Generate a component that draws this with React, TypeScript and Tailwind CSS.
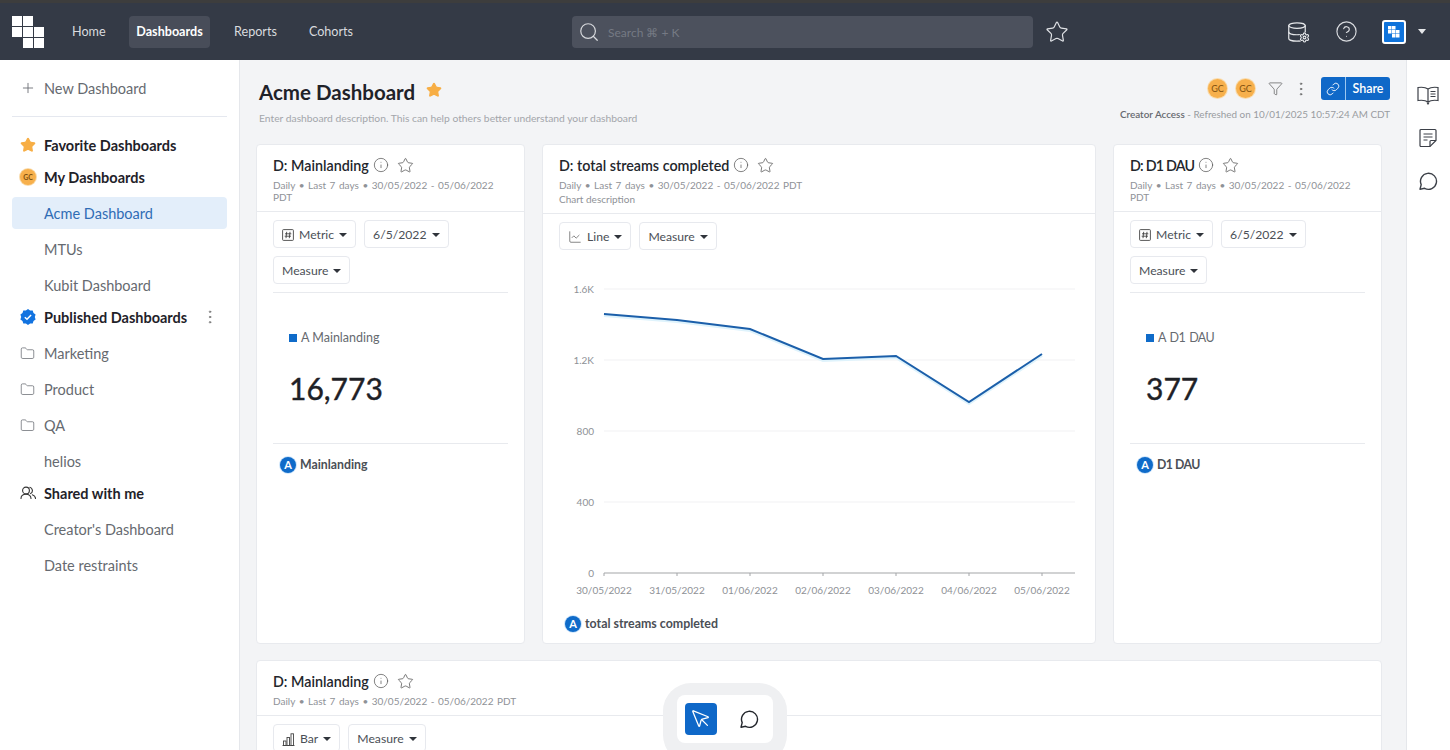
import React from "react";
import { Star, Info, Funnel, EllipsisVertical, Link, Plus, Folder, Search, CircleHelp, Database, Settings, MousePointer, ChartLine } from "lucide-react";

const Caret = ({ className = "border-t-[#333]" }: { className?: string }) => (
  <span className={`inline-block w-0 h-0 border-x-[4px] border-x-transparent border-t-[4px] ${className}`} />
);

const Logo = () => (
  <svg width="32" height="32" viewBox="0 0 32 32" className="shrink-0" fill="#fff">
    <rect x="0" y="0" width="10" height="10" />
    <rect x="11" y="0" width="10" height="10" />
    <rect x="0" y="11" width="10" height="10" />
    <rect x="11" y="11" width="10" height="10" />
    <rect x="22" y="11" width="10" height="10" />
    <rect x="11" y="22" width="10" height="10" />
    <rect x="22" y="22" width="10" height="10" />
  </svg>
);

const Bubble = ({ size = 20, color = "#3c4048" }: { size?: number; color?: string }) => (
  <svg width={size} height={size} viewBox="0 0 20 20" fill="none" stroke={color} strokeWidth="1.4" strokeLinejoin="round">
    <path d="M2 18.2 L3.2 13.6 A8 8 0 1 1 6.6 17.3 Z" />
  </svg>
);

const Avatar = ({ size = 19, text = "text-[9px]" }: { size?: number; text?: string }) => (
  <span
    className={`inline-flex items-center justify-center rounded-full bg-[#f7b04c] text-[#80500f] ring-1 ring-[#f9dcae] ${text}`}
    style={{ width: size, height: size }}
  >
    GC
  </span>
);

const Heading = ({ icon, children, extra }: { icon: React.ReactNode; children: React.ReactNode; extra?: React.ReactNode }) => (
  <div className="h-8 flex items-center pl-5 pr-6 text-[14.5px] font-bold text-[#1f2229]">
    <span className="w-[24px] flex items-center shrink-0">{icon}</span>
    <span className="flex-1 pt-[2px]">{children}</span>
    {extra}
  </div>
);

const Item = ({ children, active, icon }: { children: React.ReactNode; active?: boolean; icon?: React.ReactNode }) => (
  <div className={`h-8 mt-1 mx-3 rounded flex items-center pl-2 text-[14.5px] ${active ? "bg-[#e3eefa] text-[#2f6cb5]" : "text-[#666a70]"}`}>
    <span className="w-[24px] flex items-center shrink-0">{icon}</span>
    <span className="pt-[2px]">{children}</span>
  </div>
);

const Sidebar = () => (
  <aside className="w-[240px] shrink-0 bg-white border-r border-[#e5e7eb] pt-3">
    <div className="h-8 flex items-center pl-5 text-[14.5px] text-[#666a70]">
      <span className="w-[24px] flex items-center"><Plus size={16} strokeWidth={1.3} color="#666a70" /></span>
      <span className="pt-[2px]">New Dashboard</span>
    </div>
    <div className="mx-3 mt-3 mb-3 border-t border-[#e5e8ef]" />
    <Heading icon={<Star size={16} fill="#f7ae45" stroke="#f7ae45" />}>Favorite Dashboards</Heading>
    <Heading icon={<Avatar size={16} text="text-[7px]" />}>My Dashboards</Heading>
    <Item active>Acme Dashboard</Item>
    <Item>MTUs</Item>
    <Item>Kubit Dashboard</Item>
    <Heading
      icon={
        <svg width="16" height="16" viewBox="0 0 16 16">
          <path d="M8 0l2.1 1.5 2.6-.1.8 2.5 2.1 1.5-.8 2.6.8 2.6-2.1 1.5-.8 2.5-2.6-.1L8 16l-2.1-1.5-2.6.1-.8-2.5L.4 10.600l.8-2.600-.8-2.600 2.100-1.500.8-2.500 2.600.1z" fill="#1273e0" />
          <path d="M4.800 8.200l2.200 2.100 4.100-4.300" fill="none" stroke="#fff" strokeWidth="1.500" />
        </svg>
      }
      extra={<EllipsisVertical size={18} color="#777" strokeWidth={1.3} className="mr-[-4px]" />}
    >
      Published Dashboards
    </Heading>
    <Item icon={<Folder size={15} strokeWidth={1.2} color="#666a70" />}>Marketing</Item>
    <Item icon={<Folder size={15} strokeWidth={1.2} color="#666a70" />}>Product</Item>
    <Item icon={<Folder size={15} strokeWidth={1.2} color="#666a70" />}>QA</Item>
    <Item>helios</Item>
    <Heading
      icon={
        <svg width="16" height="16" viewBox="0 0 16 16" fill="none" stroke="#333" strokeWidth="1.100" strokeLinecap="round">
          <circle cx="6" cy="5.500" r="3.400" />
          <path d="M1 13.500c0-2.800 2-4.300 5-4.300s5 1.500 5 4.300" />
          <path d="M9.800 2.300a3.400 3.400 0 0 1 .8 6.300M12.300 9.800c1.900.6 3.200 1.900 3.200 3.700" />
        </svg>
      }
    >
      Shared with me
    </Heading>
    <Item>Creator's Dashboard</Item>
    <Item>Date restraints</Item>
  </aside>
);

const TopBar = () => (
  <div className="shrink-0">
    <div className="h-[3px] bg-[#3d3d3d]" />
    <header className="h-[57px] bg-[#343a46] flex items-center pl-3 pr-[24px]">
      <Logo />
      <nav className="flex items-center ml-7 text-[12.6px] text-[#d9dbdf]">
        <span className="w-[33px] pt-[2px]">Home</span>
        <span className="ml-6 h-8 w-[81px] rounded bg-[#484d59] flex items-center justify-center font-bold text-white pt-[2px]">Dashboards</span>
        <span className="ml-6 pt-[2px]">Reports</span>
        <span className="ml-[32px] pt-[2px]">Cohorts</span>
      </nav>
      <div className="ml-[219px] h-8 w-[461px] rounded bg-[#4c515d] flex items-center pl-[6px] text-[12px] text-[#757a84]">
        <Search size={22} strokeWidth={1.3} color="#d6d8dc" />
        <span className="ml-2 pt-[2px]">Search ⌘ + K</span>
      </div>
      <Star size={24} strokeWidth={1.2} color="#dfe1e5" className="ml-[12px]" />
      <div className="flex-1" />
      <span className="relative w-[22px] h-[22px] mr-[27px]">
        <Database size={22} strokeWidth={1.3} color="#e5e7ea" />
        <Settings size={11} strokeWidth={2.4} color="#e5e7ea" className="absolute right-[-2px] bottom-0 bg-[#343a46] rounded-full" />
      </span>
      <CircleHelp size={23} strokeWidth={1.2} color="#d9dbdf" className="mr-[24px]" />
      <span className="w-6 h-6 rounded-[3px] bg-[#0f73db] border-2 border-white flex items-center justify-center">
        <svg width="14" height="14" viewBox="0 0 14 14" fill="#fff">
          <rect x="1" y="1" width="3.500" height="3.500" /><rect x="5" y="1" width="3.500" height="3.500" />
          <rect x="1" y="5" width="3.500" height="3.500" /><rect x="5" y="5" width="3.500" height="3.500" /><rect x="9" y="5" width="3.500" height="3.500" />
          <rect x="5" y="9" width="3.500" height="3.500" /><rect x="9" y="9" width="3.500" height="3.500" />
        </svg>
      </span>
      <Caret className="ml-3 border-t-[#e5e7ea] border-x-[4.5px] border-t-[5px]" />
    </header>
  </div>
);

const Btn = ({ icon, children }: { icon?: React.ReactNode; children: React.ReactNode }) => (
  <span className="h-7 inline-flex items-center gap-[5px] px-2 rounded border border-[#e7e9ee] bg-white text-[12.2px] text-[#4b4f56] pt-[2px]">
    {icon}
    {children}
    <Caret className="border-t-[#30343b]" />
  </span>
);

const MetricIcon = (
  <svg width="12" height="12" viewBox="0 0 12 12" fill="none" stroke="#444" strokeWidth="0.900">
    <rect x="0.600" y="0.600" width="10.800" height="10.800" rx="0.800" />
    <path d="M4.700 2.800L4 9.200M8 2.800L7.300 9.200M3 4.800h6.300M2.700 7.200h6.300" />
  </svg>
);

const BarIcon = (
  <svg width="13" height="13" viewBox="0 0 13 13" fill="none" stroke="#444" strokeWidth="0.900">
    <path d="M0.500 12.500h12" />
    <rect x="1.500" y="8" width="2.500" height="4.500" />
    <rect x="5" y="4.500" width="2.500" height="8" />
    <rect x="9" y="0.800" width="2.500" height="11.700" />
  </svg>
);

const META = "Daily • Last 7 days • 30/05/2022 - 05/06/2022 PDT";

const CardTitle = ({ title, tight }: { title: string; tight?: boolean }) => (
  <div className="flex items-center h-5 text-[14.3px] font-semibold text-[#23262c]">
    <span className={`pt-[2px] ${tight ? "tracking-[-0.8px]" : ""}`}>{title}</span>
    <Info size={16} strokeWidth={1.1} color="#555" className="ml-[4px]" />
    <Star size={17} strokeWidth={1.1} color="#555" className="ml-[8px]" />
  </div>
);

const Badge = () => (
  <span className="w-4 h-4 rounded-full bg-[#0f6bc9] text-white text-[11px] font-bold flex items-center justify-center ring-1 ring-[#cfe6fb]">A</span>
);

const MetricCard = ({ title, name, value, tight }: { title: string; name: string; value: string; tight?: boolean }) => (
  <section className="w-[269px] shrink-0 h-[500px] bg-white border border-[#e8eaee] rounded">
    <div className="h-[67px] border-b border-[#e8eaee] pt-[10px] px-4">
      <CardTitle title={title} tight={tight} />
      <p className="mt-[4px] text-[10px] leading-[12px] text-[#8f9297] [word-spacing:1px]">{META}</p>
    </div>
    <div className="mx-4 pt-2">
      <div className="flex flex-wrap gap-2 pb-2 border-b border-[#e8eaee]">
        <Btn icon={MetricIcon}>Metric</Btn>
        <Btn>6/5/2022</Btn>
        <Btn>Measure</Btn>
      </div>
      <div className="pl-4 pt-[37px] h-[151px] border-b border-[#e8eaee]">
        <div className={`flex items-center text-[12.5px] leading-4 text-[#666a70] ${tight ? "tracking-[-0.6px] [word-spacing:1.5px]" : ""}`}>
          <span className="w-2 h-2 bg-[#0f6bc9] mr-1" />A {name}
        </div>
        <div className="mt-[22px] text-[30px] leading-10 text-[#1e2126] [-webkit-text-stroke:0.4px_#1e2126]">{value}</div>
      </div>
      <div className="pl-[7px] pt-[12px] flex items-center gap-1 text-[12.3px] font-bold text-[#4b4f56]">
        <Badge />
        <span className={tight ? "tracking-[-0.5px]" : ""}>{name}</span>
      </div>
    </div>
  </section>
);

const Chart = () => {
  const ys = [289, 360, 431, 502];
  const labels = ["1.6K", "1.2K", "800", "400"];
  const xs = [604, 677, 750, 823, 896, 969, 1042];
  const dates = ["30/05/2022", "31/05/2022", "01/06/2022", "02/06/2022", "03/06/2022", "04/06/2022", "05/06/2022"];
  const pts = [314, 320, 329, 359, 356, 402, 354];
  const poly = xs.map((x, i) => `${x},${pts[i]}`).join(" ");
  return (
    <svg width="552" height="325" viewBox="543 275 552 325" className="block mt-[25px]" fontFamily="Lato, sans-serif" fontSize="10" fill="#8e9196">
      {ys.map((y, i) => (
        <g key={y}>
          <line x1="604" x2="1075" y1={y} y2={y} stroke="#f1f2f4" strokeWidth="1.200" />
          <text x="594" y={y + 4} textAnchor="end">{labels[i]}</text>
        </g>
      ))}
      <text x="594" y="577" textAnchor="end">0</text>
      <line x1="604" x2="1075" y1="573" y2="573" stroke="#a3a5a8" strokeWidth="1.200" />
      {xs.map((x, i) => (
        <g key={x}>
          <line x1={x} x2={x} y1="573" y2="576" stroke="#a3a5a8" />
          <text x={x} y="594" textAnchor="middle">{dates[i]}</text>
        </g>
      ))}
      <polyline points={poly} fill="none" stroke="#dff3fc" strokeWidth="3" transform="translate(0 1.500)" />
      <polyline points={poly} fill="none" stroke="#1b5faa" strokeWidth="2" />
    </svg>
  );
};

const LineCard = () => (
  <section className="w-[554px] shrink-0 h-[500px] bg-white border border-[#e8eaee] rounded">
    <div className="h-[69px] border-b border-[#e8eaee] pt-[10px] px-4">
      <CardTitle title="D: total streams completed" />
      <p className="mt-[3px] text-[10px] leading-[14px] text-[#8f9297] [word-spacing:1px]">{META}</p>
      <p className="text-[10px] leading-[14px] text-[#8f9297]">Chart description</p>
    </div>
    <div className="px-4 pt-2 flex gap-2">
      <Btn icon={<ChartLine size={14} strokeWidth={1.1} color="#444" />}>Line</Btn>
      <Btn>Measure</Btn>
    </div>
    <Chart />
    <div className="pl-[22px] mt-[15px] flex items-center gap-1 text-[12.4px] font-bold text-[#4b4f56]">
      <Badge />
      total streams completed
    </div>
  </section>
);

const BottomCard = () => (
  <section className="mt-[16px] w-[1126px] h-[200px] bg-white border border-[#e8eaee] rounded">
    <div className="h-[55px] border-b border-[#e8eaee] pt-[10px] px-4">
      <CardTitle title="D: Mainlanding" />
      <p className="mt-[3px] text-[10px] leading-[14px] text-[#8f9297] [word-spacing:1px]">{META}</p>
    </div>
    <div className="px-4 pt-2 flex gap-2">
      <Btn icon={BarIcon}>Bar</Btn>
      <Btn>Measure</Btn>
    </div>
  </section>
);

const PageHeader = () => (
  <div className="h-[84px] flex justify-between pl-[19px] pr-4 shrink-0">
    <div className="pt-4">
      <div className="flex items-center h-8">
        <h1 className="text-[20.5px] font-bold text-[#1f2229]">Acme Dashboard</h1>
        <Star size={16} fill="#f7ae45" stroke="#f7ae45" className="ml-[11px] -mt-1" />
      </div>
      <p className="mt-[3px] text-[10.3px] leading-[14px] text-[#a3a6ab]">Enter dashboard description. This can help others better understand your dashboard</p>
    </div>
    <div className="pt-[17px] flex flex-col items-end">
      <div className="flex items-center h-[23px]">
        <Avatar />
        <span className="ml-[9px] inline-flex"><Avatar /></span>
        <Funnel size={15} strokeWidth={1.1} color="#555" className="ml-[13px]" />
        <EllipsisVertical size={18} strokeWidth={1.2} color="#666" className="ml-[9px]" />
        <div className="ml-[11px] h-[23px] w-[69px] rounded-[3px] bg-[#0f68c8] flex items-center text-white text-[12.5px] font-semibold">
          <span className="w-[25px] h-full flex items-center justify-center border-r border-[#9cc7f0]"><Link size={14} strokeWidth={1.5} color="#fff" /></span>
          <span className="flex-1 text-center pt-[1px]">Share</span>
        </div>
      </div>
      <p className="mt-[7px] text-[9.9px] leading-[14px] text-[#999ca1]">
        <span className="font-semibold text-[#66696f]">Creator Access</span> - Refreshed on 10/01/2025 10:57:24 AM CDT
      </p>
    </div>
  </div>
);

const Rail = () => (
  <aside className="w-[44px] shrink-0 bg-white border-l border-[#e5e7eb] flex flex-col items-center pt-[25px] gap-[23px] pr-[1px]">
    <svg width="22" height="20" viewBox="0 0 22 20" fill="none" stroke="#3c4048" strokeWidth="1.200">
      <path d="M11 4C9 2.500 5 2 1 2.500V15.500C5 15 9 15.500 11 17C13 15.500 17 15 21 15.500V2.500C17 2 13 2.500 11 4ZM11 4V17" />
      <path d="M13.500 6.500h5M13.500 9h5M13.500 11.500h5" />
      <path d="M10 17.500l1 1.500 1-1.500" />
    </svg>
    <svg width="20" height="20" viewBox="0 0 20 20" fill="none" stroke="#3c4048" strokeWidth="1.200">
      <path d="M12 18.500H3a1 1 0 0 1-1-1V2.500a1 1 0 0 1 1-1h14a1 1 0 0 1 1 1V12.500Z" />
      <path d="M12 18.500V13.500a1 1 0 0 1 1-1h5M5.500 6h9M5.500 9h9M5.500 12h4" />
    </svg>
    <Bubble size={20} />
  </aside>
);

const FloatTool = () => (
  <div className="absolute left-[663px] top-[683px] w-[124px] h-[80px] rounded-[28px] bg-[#eff0f2] flex justify-center pt-[12px]">
    <div className="w-[96px] h-[48px] rounded-lg bg-white flex items-center pl-2">
      <span className="w-8 h-8 rounded bg-[#0f68c8] flex items-center justify-center">
        <MousePointer size={22} strokeWidth={1.400} color="#fff" />
      </span>
      <span className="ml-[22px] flex"><Bubble size={20} color="#23262c" /></span>
    </div>
  </div>
);

export default function App() {
  return (
    <div className="relative w-[1450px] h-[750px] overflow-hidden flex flex-col bg-[#f3f4f6] font-['Lato',sans-serif]">
      <TopBar />
      <div className="flex flex-1 min-h-0">
        <Sidebar />
        <main className="flex-1 min-w-0 flex flex-col overflow-hidden">
          <PageHeader />
          <div className="pl-4 pr-[24px]">
            <div className="flex gap-[17px]">
              <MetricCard title="D: Mainlanding" name="Mainlanding" value="16,773" />
              <LineCard />
              <MetricCard title="D: D1 DAU" name="D1 DAU" value="377" tight />
            </div>
            <BottomCard />
          </div>
        </main>
        <Rail />
      </div>
      <FloatTool />
    </div>
  );
}
